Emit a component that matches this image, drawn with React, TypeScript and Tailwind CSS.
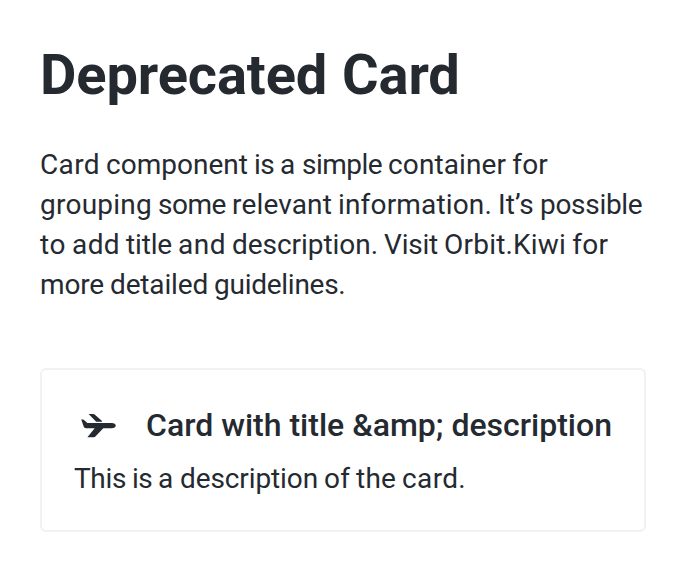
type Word = [text: string, tracking: number];

const intro: Word[][] = [
  [["Card", 0.38], ["component", 0.02], ["is", -0.63], ["a", 0.77], ["simple", -0.53], ["container", 0.1], ["for", 0.27]],
  [["grouping", 0.24], ["some", -0.45], ["relevant", 0.15], ["information.", 0.16], ["It’s", 0.17], ["possible", -0.3]],
  [["to", 0.57], ["add", 0.4], ["title", -0.16], ["and", 0.5], ["description.", -0.05], ["Visit", -0.21], ["Orbit.Kiwi", 0.2], ["for", 0.27]],
  [["more", -0.15], ["detailed", -0.16], ["guidelines.", -0.27]],
];

const description: Word[] = [["This", -0.35], ["is", -0.63], ["a", 0.77], ["description", -0.11], ["of", 0.15], ["the", 0.19], ["card.", 0.34]];

function Line({ words }: { words: Word[] }) {
  return (
    <span className="block [word-spacing:-0.93px] whitespace-nowrap">
      {words.map(([text, tracking], i) => (
        <span key={i}>
          {i > 0 && " "}
          <span style={{ letterSpacing: tracking }}>{text}</span>
        </span>
      ))}
    </span>
  );
}

function Airplane() {
  return (
    <svg className="mr-6 size-12 shrink-0" viewBox="0 0 48 48" fill="currentColor" aria-hidden="true">
      <path d="M14.6 13h4.6c.6 0 1 .2 1.4.5l7.2 6.3c.5.5.3 1-.4 1h-4.6c-.5 0-.8-.1-1.1-.5z" />
      <path d="M7.2 18.6h1.7c.6 0 1 .2 1.4.6l3.1 2.7h24.3c2.5 0 4 1 4 2.7s-1.5 2.7-4 2.7h-8.4l-7.9 8.3c-.5.5-.9.7-1.6.7h-6.4l7.3-9h-8.6c-1.2 0-2-.6-2.4-1.7z" />
    </svg>
  );
}

export default function App() {
  return (
    <main className="h-[572px] bg-white px-10 font-[Roboto,sans-serif] text-[#252a31]">
      <h1 className="pt-[43px] text-[56px] leading-[64px] font-bold tracking-[-0.1px] [word-spacing:1px]">Deprecated Card</h1>
      <p className="mt-[38px] text-[28px] leading-10">
        {intro.map((words, i) => (
          <Line key={i} words={words} />
        ))}
      </p>
      <section className="mt-[63px] h-[164px] w-[606px] rounded-md border-2 border-[#eff2f5] px-8 pt-[31px] whitespace-nowrap">
        <div className="flex h-12 items-center">
          <Airplane />
          <h2 className="text-[32px] leading-10 font-medium">Card with title &amp;amp; description</h2>
        </div>
        <p className="mt-2.5 text-[28px] leading-10">
          <Line words={description} />
        </p>
      </section>
    </main>
  );
}
